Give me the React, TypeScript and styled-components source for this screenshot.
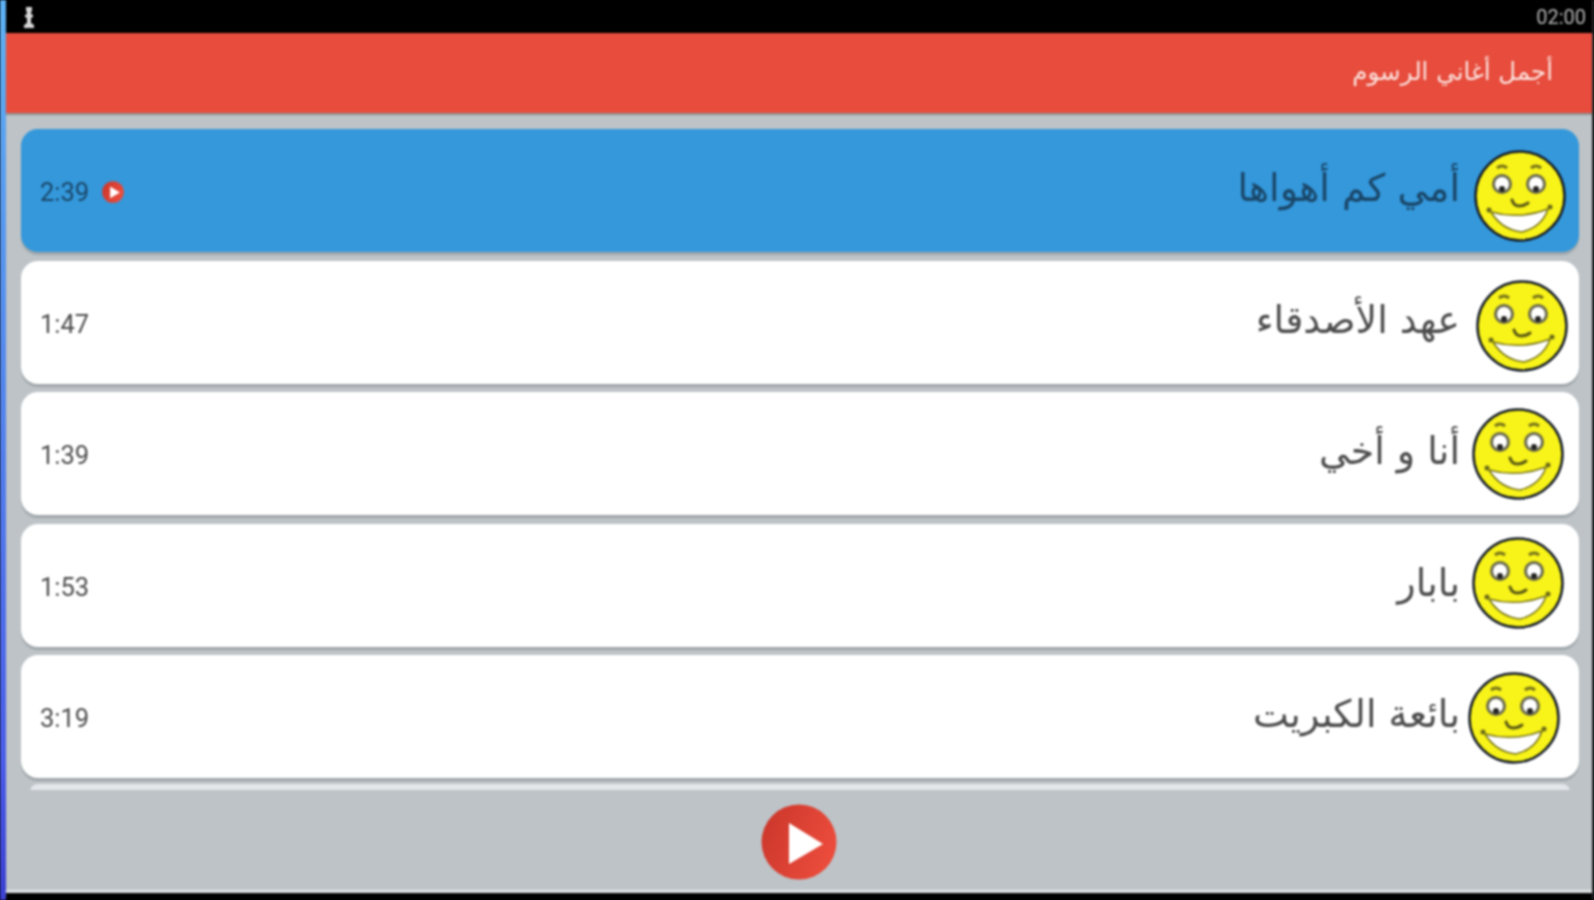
import styled, { createGlobalStyle } from 'styled-components'

type Song = {
  title: string
  time: string
  faceRight: number
  faceTop: number
}

const songs: Song[] = [
  { title: 'أمي كم أهواها', time: '2:39', faceRight: 13, faceTop: 5 },
  { title: 'عهد الأصدقاء', time: '1:47', faceRight: 11, faceTop: 4 },
  { title: 'أنا و أخي', time: '1:39', faceRight: 15, faceTop: 0 },
  { title: 'بابار', time: '1:53', faceRight: 15, faceTop: -2 },
  { title: 'بائعة الكبريت', time: '3:19', faceRight: 19, faceTop: 1 }
]

const Face = () => (
  <FaceSvg viewBox="0 0 92 92">
    <circle cx="46" cy="46" r="44.5" fill="#f8f318" stroke="#141c28" strokeWidth="2.5" />
    <path d="M23 18q5-4 10 0M57 18q5-4 10 0" fill="none" stroke="#77741a" strokeWidth="3" />
    <circle cx="28" cy="34" r="8.5" fill="#fff" stroke="#6a6a50" strokeWidth="3" />
    <circle cx="62" cy="34" r="8.5" fill="#fff" stroke="#6a6a50" strokeWidth="3" />
    <circle cx="28" cy="39" r="3" fill="#222" />
    <circle cx="62" cy="39" r="3" fill="#222" />
    <path d="M38 50q2 6 7 6t9-3" fill="none" stroke="#5b5a14" strokeWidth="3" strokeLinecap="round" />
    <path d="M17 62q28 8 57-3q-6 18-26 23q-20-2-31-20z" fill="#fff" stroke="#77741a" strokeWidth="1.5" />
    <circle cx="15" cy="60" r="2.5" fill="#6a6a18" />
    <circle cx="76" cy="57" r="2.5" fill="#6a6a18" />
  </FaceSvg>
)

const PlayBadge = ({ size }: { size: number }) => (
  <svg width={size} height={size} viewBox="0 0 76 76">
    <defs>
      <linearGradient id="playRed" x1="0" y1="0" x2="1" y2="0.4">
        <stop offset="0" stopColor="#c9352a" />
        <stop offset="1" stopColor="#ea4b3b" />
      </linearGradient>
    </defs>
    <circle cx="38" cy="38" r="37.5" fill="url(#playRed)" />
    <path d="M28 19 L62 40 L28 60 Z" fill="#fff" />
  </svg>
)

const App = () => {
  return (
    <>
      <GlobalStyle />
      <Screen>
        <LeftEdge />
        <Main>
          <StatusBar>
            <Pawn viewBox="0 0 14 22">
              <path d="M4 1h6v3l-1 3v1l2 1v2l-2 1v5l3 2v3H2v-3l3-2v-5l-2-1V9l2-1V7L4 4z" fill="#d8d8d8" />
            </Pawn>
            <Clock>02:00</Clock>
          </StatusBar>
          <Header>أجمل أغاني الرسوم</Header>
          <List>
            {songs.map((song, index) => (
              <Row key={song.title} $active={index === 0}>
                <Duration $active={index === 0}>
                  {song.time}
                  {index === 0 && <PlayBadge size={22} />}
                </Duration>
                <Title $active={index === 0}>{song.title}</Title>
                <FaceSlot $right={song.faceRight} $top={song.faceTop}>
                  <Face />
                </FaceSlot>
              </Row>
            ))}
            <NextRow />
          </List>
          <Footer>
            <PlayBadge size={76} />
          </Footer>
          <BottomEdge />
        </Main>
        <RightEdge />
      </Screen>
    </>
  )
}

export default App

const GlobalStyle = createGlobalStyle`
  html, body {
    margin: 0;
    height: 100%;
    background: #000;
  }
`

const Screen = styled.div`
  width: 1594px;
  height: 900px;
  display: flex;
  overflow: hidden;
  background: #bdc3c7;
  font-family: "DejaVu Sans", "Liberation Sans", sans-serif;
  filter: blur(0.8px);
`

const LeftEdge = styled.div`
  width: 6px;
  flex: none;
  background: linear-gradient(#5db1f2, #4a5ce8 85%, #3a3fd0);
`

const RightEdge = styled.div`
  width: 2px;
  flex: none;
  background: #26292c;
`

const Main = styled.div`
  flex: 1;
  min-width: 0;
  display: flex;
  flex-direction: column;
`

const StatusBar = styled.div`
  height: 33px;
  flex: none;
  background: #000;
  display: flex;
  align-items: center;
  justify-content: space-between;
  padding: 0 6px 0 16px;
`

const Pawn = styled.svg`
  width: 14px;
  height: 22px;
`

const Clock = styled.span`
  font-family: Roboto, "Liberation Sans", sans-serif;
  font-size: 20px;
  color: #b4b4b4;
`

const Header = styled.div`
  height: 80px;
  flex: none;
  box-sizing: border-box;
  background: #e74c3c;
  color: #fbe4e0;
  direction: rtl;
  display: flex;
  align-items: center;
  padding: 0 39px 3px 0;
  font-size: 24.5px;
  box-shadow: 0 2px 1px #8f9497;
  position: relative;
`

const List = styled.div`
  flex: 1;
  min-height: 0;
  overflow: hidden;
  display: flex;
  flex-direction: column;
  gap: 8.5px;
  padding: 16px 13px 0 15px;
`

const Row = styled.div<{ $active: boolean }>`
  height: 123px;
  flex: none;
  box-sizing: border-box;
  display: flex;
  align-items: center;
  padding-left: 19px;
  border-radius: 17px;
  background: ${p => (p.$active ? '#3498db' : '#fff')};
  box-shadow: 0 3px 1px #a0a7ab;
`

const NextRow = styled.div`
  height: 123px;
  flex: none;
  margin: -2.5px 9px 0;
  border-radius: 8px;
  background: #e4e7e9;
`

const Duration = styled.div<{ $active: boolean }>`
  display: flex;
  align-items: center;
  gap: 13px;
  margin-top: 3px;
  font-family: Roboto, "Liberation Sans", sans-serif;
  font-size: 25.5px;
  color: ${p => (p.$active ? '#1a4668' : '#4c4c4c')};
`

const Title = styled.div<{ $active: boolean }>`
  flex: 1;
  direction: rtl;
  margin-bottom: 5px;
  font-size: 38px;
  color: ${p => (p.$active ? '#1a4668' : '#4c4c4c')};
`

const FaceSlot = styled.div<{ $right: number; $top: number }>`
  flex: none;
  width: 92px;
  height: 92px;
  margin-right: ${p => p.$right}px;
  margin-left: ${p => 27 - p.$right}px;
  margin-top: ${p => p.$top * 2}px;
`

const FaceSvg = styled.svg`
  display: block;
  width: 92px;
  height: 92px;
`

const Footer = styled.div`
  height: 103px;
  flex: none;
  display: flex;
  align-items: flex-start;
  justify-content: center;
  padding-top: 14px;
  box-sizing: border-box;
`

const BottomEdge = styled.div`
  height: 7px;
  flex: none;
  background: #000;
  box-shadow: 0 -3px 1px #dfe2e4;
`
